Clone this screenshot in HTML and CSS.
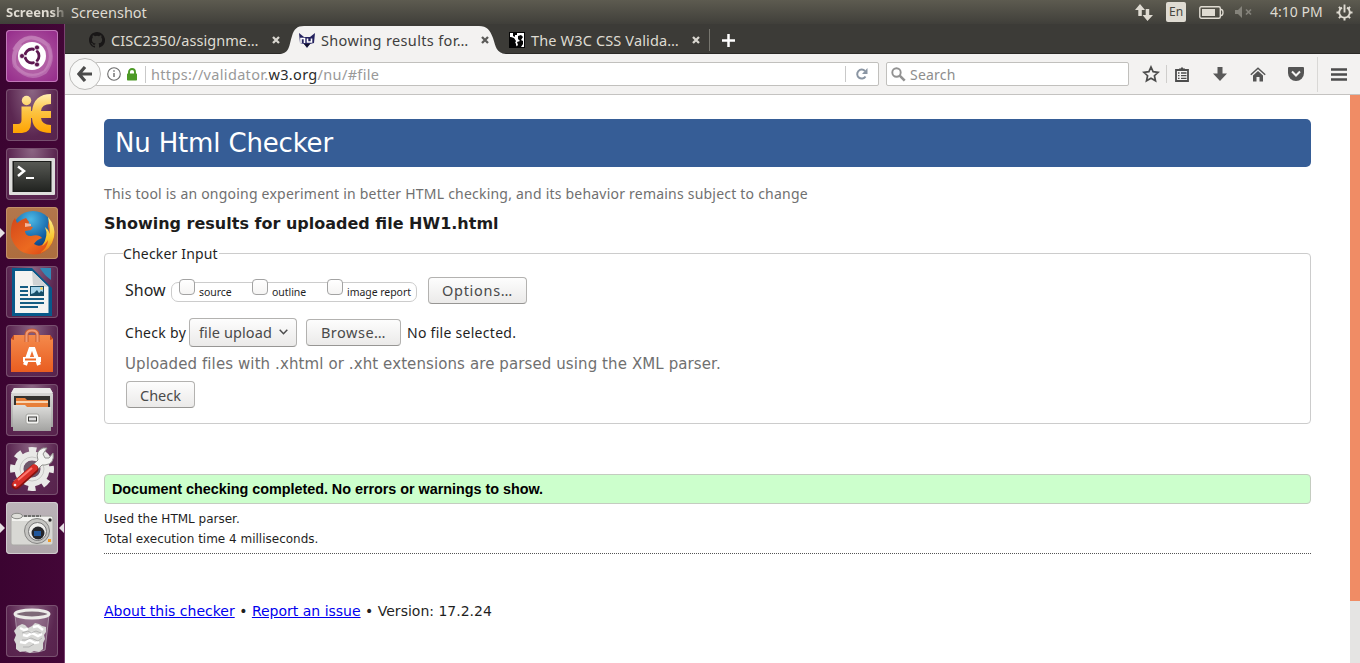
FILE: index.html
```html
<!DOCTYPE html>
<html lang="en">
<head>
<meta charset="utf-8">
<title>Nu Html Checker</title>
<link rel="stylesheet" href="styles.css">
</head>
<body>
<svg class="defs" width="0" height="0">
  <defs>
    <linearGradient id="gold" gradientUnits="userSpaceOnUse" x1="0" y1="4" x2="0" y2="44"><stop offset="0" stop-color="#fff0b8"/><stop offset=".45" stop-color="#fcc544"/><stop offset="1" stop-color="#ffa200"/></linearGradient>
    <linearGradient id="term" x1="0" y1="0" x2="0" y2="1"><stop offset="0" stop-color="#575954"/><stop offset="1" stop-color="#232522"/></linearGradient>
    <radialGradient id="globe" cx=".45" cy=".2" r=".8"><stop offset="0" stop-color="#4bb8e5"/><stop offset=".6" stop-color="#1462a6"/><stop offset="1" stop-color="#082d6b"/></radialGradient>
    <linearGradient id="fox" x1="0" y1="0" x2="1" y2="1"><stop offset="0" stop-color="#d4481a"/><stop offset=".6" stop-color="#ec6a20"/><stop offset="1" stop-color="#d83b12"/></linearGradient>
    <linearGradient id="tail" x1="0" y1="0" x2="0" y2="1"><stop offset="0" stop-color="#fff08b"/><stop offset=".6" stop-color="#f8c42c"/><stop offset="1" stop-color="#ec741b"/></linearGradient>
    <linearGradient id="bag" x1="0" y1="0" x2="0" y2="1"><stop offset="0" stop-color="#f48a4c"/><stop offset="1" stop-color="#e95d20"/></linearGradient>
    <linearGradient id="metal" x1="0" y1="0" x2="0" y2="1"><stop offset="0" stop-color="#dededc"/><stop offset="1" stop-color="#a3a3a1"/></linearGradient>
  </defs>
</svg>

<header class="panel">
  <div class="panel-app">Screensh</div>
  <div class="panel-title">Screenshot</div>
  <div class="indicators">
    <svg class="ind-net" width="18" height="17" viewBox="0 0 18 17"><path d="M5 0l5 6H6.800v6H3.300V6H0zM12.500 17l-5-6h3.200V5h3.500v6H18z" fill="#dfdbd2"/></svg>
    <span class="ind-lang">En</span>
    <svg class="ind-bat" width="25" height="13" viewBox="0 0 25 13"><rect x=".8" y=".8" width="20.500" height="11.400" rx="1.500" fill="none" stroke="#dfdbd2" stroke-width="1.400"/><path d="M3 3h13v7H3z" fill="#dfdbd2"/><path d="M22 3.500q2 0 2 3t-2 3" fill="none" stroke="#dfdbd2" stroke-width="1.300"/></svg>
    <svg class="ind-vol" width="18" height="12" viewBox="0 0 18 12"><path d="M0 4h3l4-4v12L3 8H0z" fill="#85837b"/><path d="M11 3.500l5 5m0-5l-5 5" stroke="#85837b" stroke-width="1.700"/></svg>
    <span class="clock">4:10 PM</span>
    <svg class="ind-gear" width="17" height="17" viewBox="0 0 17 17"><g fill="none" stroke="#dfdbd2"><path d="M6 3.700a5.300 5.300 0 1 0 5 0" stroke-width="1.900"/><path d="M8.500 .5v8" stroke-width="1.900"/><path d="M3.500 8.500H.5m13 0h3M8.500 13.500v3M4.900 12.100l-2 2m9.200-2l2 2M4.700 4.700l-1.800-1.800m9.400 1.800l1.800-1.800" stroke-width="2"/></g></svg>
  </div>
</header>

<div class="workspace">
  <nav class="launcher">
    <div class="tile tile-dash"><svg width="52" height="52" viewBox="0 0 52 52"><circle cx="26" cy="26" r="20" fill="#c078b4" opacity=".45"/><path d="M8 20Q21-2 42 15Q49 29 39 42Q23 52 9 36Q5 24 15 14" fill="none" stroke="#e0b5d9" stroke-width="4" opacity=".35"/><circle cx="26" cy="26" r="14" fill="#fff"/><circle cx="26" cy="26" r="7" fill="none" stroke="#5d1750" stroke-width="2.800"/><path d="M26 26L33 14M26 26L33 38M26 26H12" stroke="#fff" stroke-width="1.600"/><circle cx="26" cy="26" r="4" fill="#fff"/><g fill="#5d1750" stroke="#fff" stroke-width=".7"><circle cx="16" cy="26" r="2.500"/><circle cx="31" cy="17.500" r="2.500"/><circle cx="31" cy="34.500" r="2.500"/></g></svg></div>
    <div class="tile"><svg width="52" height="52" viewBox="0 0 52 52"><g fill="url(#gold)"><circle cx="20.500" cy="11.500" r="4.700"/><path d="M15.500 17.500h9.500v16q0 10-9 10.500H7v-9h5q3.500 0 3.500-4z"/><path d="M45 5v10q-9.500 0-10 7h10v7H35q.5 6.500 10 7v8Q27 44 26 29h-3v-7h3Q28 5 45 5z"/></g></svg></div>
    <div class="tile"><svg width="52" height="52" viewBox="0 0 52 52"><rect x="3" y="10" width="46" height="37" rx="1" fill="#dededc"/><rect x="6.500" y="13" width="39" height="31" fill="#1c1d1b"/><rect x="8" y="14" width="36" height="28.500" fill="url(#term)"/><path d="M12 18.500l6 4.500-6 5" fill="none" stroke="#fff" stroke-width="2.500"/><path d="M20 30h8" stroke="#fff" stroke-width="2"/></svg></div>
    <div class="tile tile-firefox"><svg width="52" height="52" viewBox="0 0 52 52"><circle cx="27" cy="25" r="21" fill="url(#globe)"/><path d="M43 11Q50 23 48 31Q42 50 23 47Q10 45 5 30Q4 17 9 11L11 16Q16 12 20 11L23 15L22 19L27 20L25 23L19 24Q19 29 25 29Q33 27 36 31Q30 33 28 37Q36 42 41 32Q44 27 42 19z" fill="url(#fox)"/><path d="M42 10Q50 19 48 30Q45 43 34 46Q42 40 42 33Q39 38 36 39Q43 29 39 20Q43 23 44 27Q44 18 42 10z" fill="url(#tail)"/><path d="M19 16l6 1v2l-6 1z" fill="#f5b59b"/></svg><i class="run-left"></i></div>
    <div class="tile"><svg width="52" height="52" viewBox="0 0 52 52"><path d="M6 2h20l20 20v28H6z" fill="#07598a"/><path d="M9 5h17l16.500 16v26H9z" fill="#f4f4f2"/><path d="M26 5l1 14 15.500 2z" fill="#cfd3d4"/><path d="M34 2h11v12q-7-5-11-12z" fill="#3288b6"/><path d="M14 21h8m-8 4h8m-8 4h8m-8 4h24m-24 4h24m-24 4h18" stroke="#155d83" stroke-width="2"/><path d="M24 20h14v10H24z" fill="#164e68"/><path d="M25 21h12v5l-2-1-2 2-2-3-3 3-3 1z" fill="#a8d5ea"/><circle cx="35.500" cy="22.500" r="1.200" fill="#ffcf42"/></svg></div>
    <div class="tile"><svg width="52" height="52" viewBox="0 0 52 52"><path d="M5 14l3-4h36l3 4v33H5z" fill="url(#bag)"/><path d="M5 14l3-4v5zM47 14l-3-4v5z" fill="#c84a19"/><path d="M20.500 17v-7q0-4.500 5.500-4.500t5.500 4.500v7" fill="none" stroke="#c65a31" stroke-width="4"/><path d="M20.500 17v-7q0-4.500 5.500-4.500t5.500 4.500v7" fill="none" stroke="#f19a72" stroke-width="2.200"/><path d="M19 40l5.500-16h3L33 40" fill="none" stroke="#fff" stroke-width="4"/><path d="M17 34.500h18" stroke="#fff" stroke-width="5"/><path d="M19 34.500h11" stroke="#ec6827" stroke-width="2"/></svg></div>
    <div class="tile"><svg width="52" height="52" viewBox="0 0 52 52"><path d="M8 4h36l3 6v33H5V10z" fill="url(#metal)"/><path d="M8 4h36l3 5H5z" fill="#ebebe9"/><path d="M8 12h36v20H8z" fill="#343330"/><path d="M10 14h9l2 2h21v8H10z" fill="#e77f39"/><path d="M10 18h32" stroke="#fff1d8" stroke-width="1.500"/><path d="M7 21h12l2 2h24v24H7z" fill="url(#metal)"/><rect x="20" y="30" width="13" height="10" rx="2" fill="#f3f3f1" stroke="#a4a4a0"/><rect x="22.500" y="33" width="8" height="4" fill="#ddd" stroke="#393936"/></svg></div>
    <div class="tile"><svg width="52" height="52" viewBox="0 0 52 52"><g fill="none" stroke="#e9e9e7"><circle cx="26" cy="26" r="13" stroke-width="9"/><circle cx="26" cy="26" r="19" stroke-width="6" stroke-dasharray="7.460 7.460" stroke-dashoffset="3.700"/></g><circle cx="26" cy="26" r="12" fill="none" stroke="#c8c8c6"/><circle cx="26" cy="26" r="8" fill="#6c5869"/><path d="M27 22l5-5q-3-9 5-12l4 0-4 6 2 4 4 0 4-5q2 11-8 12h-3l-5 5z" fill="#f3f3f1" stroke="#92928f"/><path d="M10 42l18-16" stroke="#87120f" stroke-width="9" stroke-linecap="round"/><path d="M10 41l18-16" stroke="#d72f29" stroke-width="7" stroke-linecap="round"/><path d="M12 37l14-12" stroke="#ff7770" stroke-width="2"/><circle cx="9" cy="42" r="1.300" fill="#eee"/></svg></div>
    <div class="tile tile-camera"><svg width="52" height="52" viewBox="0 0 52 52"><rect x="5" y="14" width="42" height="29" rx="2" fill="#d8d8d4" stroke="#aaa9a6"/><path d="M6 15h40v4H6z" fill="#f2f2ef"/><ellipse cx="11" cy="14" rx="5.500" ry="2.700" fill="#deded9" stroke="#8b8b88"/><path d="M18 14h17" stroke="#6f6f6d" stroke-width="2" stroke-dasharray="3 1"/><circle cx="31" cy="29" r="12.500" fill="#c4c4c1" stroke="#858583"/><circle cx="31.500" cy="29.500" r="9" fill="#efefed" stroke="#777"/><circle cx="32" cy="31" r="6.500" fill="#25262a"/><path d="M28 29h7v5h-7z" fill="#20569b"/><circle cx="44" cy="18" r="1.700" fill="#222"/><path d="M42 37h3v3h-3z" fill="#f49b24"/></svg><i class="run-left"></i><i class="run-right"></i></div>
    <div class="tile tile-trash"><svg width="52" height="52" viewBox="0 0 52 52"><path d="M9 10l4 35q13 5 26 0l4-35" fill="#eee" fill-opacity=".2" stroke="#a48da0"/><path d="M12 21l4-2 3 1 3 3 4-2 3-3 4 1 3 2 4 1 0 5-2 3 1 4-2 4v6l-4 3-5-1-4 2-5-2-5 1-4-3v-5l-2-4 2-5-2-4z" fill="#d8d8d6"/><path d="M14 23l4 2 4-1m5-2l5-1 5 4m-20 5l4 1 5-3 6 3 4-2m-22 8l5 1 4-3 6 3 4-1" fill="none" stroke="#fff" stroke-width="2.500"/><path d="M16 28l6-2 3 2 5-2 5 2m-19 7l4 0 5-2 7 3 4-3m-19 9l6 0 5-3" fill="none" stroke="#aaa" stroke-width=".8"/><ellipse cx="26" cy="9" rx="17" ry="4" fill="#7e6a78" stroke="#ecebe8" stroke-width="3"/></svg></div>
  </nav>

  <main class="browser">
    <div class="tabs">
      <div class="tab tab-github">
        <svg class="fav" width="16" height="16" viewBox="0 0 16 16"><path fill="#191717" d="M8 0C3.580 0 0 3.580 0 8c0 3.540 2.290 6.530 5.470 7.590.4.070.550-.17.550-.38v-1.490c-2.010.37-2.530-.49-2.690-.94-.09-.23-.48-.94-.82-1.130-.28-.15-.68-.52-.01-.53.630-.01 1.080.58 1.230.82.720 1.210 1.870.87 2.330.66.070-.52.280-.87.510-1.070-1.780-.2-3.640-.89-3.640-3.950 0-.87.310-1.590.82-2.150-.08-.2-.36-1.020.08-2.120 0 0 .67-.21 2.200.82a7.500 7.500 0 0 1 4 0c1.530-1.040 2.200-.82 2.200-.82.440 1.100.16 1.920.08 2.120.51.560.82 1.270.82 2.150 0 3.070-1.870 3.750-3.650 3.950.29.250.54.730.54 1.480v2.200c0 .21.150.46.550.38A8 8 0 0 0 8 0z"/></svg>
        <span class="tab-name t1">CISC2350/assignme…</span>
        <svg class="close" width="8" height="8" viewBox="0 0 8 8"><path d="M1 1l6 6m0-6l-6 6" stroke="#d9d6cf" stroke-width="2.300"/></svg>
      </div>
      <div class="tab tab-active">
        <svg class="tab-shape" width="232" height="30" viewBox="0 0 232 30"><path d="M0 30C10 29 9 21 12 12C14 5 17 2 24 2H199C207 2 210 6 213 14C216 23 216 29 226 30z" fill="#f3f2f1"/></svg>
        <svg class="fav" width="16" height="16" viewBox="0 0 16 16"><path d="M0 1l5 4h6l5-4-1 10-4 1-3 4-3-4-4-1z" fill="#25235f"/><path d="M2 11V6.500h3.500V11m3-4.500V10h4V6.500" fill="none" stroke="#fff" stroke-width="1.600"/><path d="M5 12h6l-3 3z" fill="#111127"/></svg>
        <span class="tab-name t2">Showing results for…</span>
        <svg class="close" width="8" height="8" viewBox="0 0 8 8"><path d="M1 1l6 6m0-6l-6 6" stroke="#5b5b59" stroke-width="2.300"/></svg>
      </div>
      <div class="tab tab-css">
        <svg class="fav" width="16" height="16" viewBox="0 0 16 16"><path d="M0 0h16v16H0z" fill="#050505"/><path d="M1 1h3v3l2 1V3h2V1h7v14h-3l2-3V9l-2-1 2-3-2-2-3 1v3l2 2-3 1 1 3-2 2H7v-3L5 9 4 6 1 5z" fill="#fff"/><path d="M1 5l4 1 2 3-1 2 2 4H1z" fill="#050505"/></svg>
        <span class="tab-name t3">The W3C CSS Valida…</span>
        <svg class="close" width="8" height="8" viewBox="0 0 8 8"><path d="M1 1l6 6m0-6l-6 6" stroke="#d9d6cf" stroke-width="2.300"/></svg>
      </div>
      <svg class="newtab" width="13" height="13" viewBox="0 0 13 13"><path d="M6.500 0v13M0 6.500h13" stroke="#fff" stroke-width="2.500"/></svg>
    </div>

    <div class="toolbar">
      <div class="back"><svg width="16" height="16" viewBox="0 0 16 16"><path d="M8 1L2 8l6 7M2.500 8H15" fill="none" stroke="#4b4b4b" stroke-width="3.200"/></svg></div>
      <div class="urlbar">
        <svg class="info" width="14" height="14" viewBox="0 0 14 14"><circle cx="7" cy="7" r="6.300" fill="none" stroke="#6b6b6b" stroke-width="1.100"/><path d="M7 6v4M7 3.300v1.400" stroke="#6b6b6b" stroke-width="1.400"/></svg>
        <svg class="lock" width="10" height="13" viewBox="0 0 10 13"><path d="M2 6V4a3 3 0 0 1 6 0v2" fill="none" stroke="#4d9a26" stroke-width="1.900"/><rect y="5.500" width="10" height="7" rx=".7" fill="#4d9a26"/></svg>
        <span class="url">https://validator.<b>w3.org</b>/nu/#file</span>
        <span class="reload"><svg width="12" height="12" viewBox="0 0 12 12"><path d="M9.500 8.500A4.500 4.500 0 1 1 9 3" fill="none" stroke="#8a95a3" stroke-width="2"/><path d="M11.500 0v6H6z" fill="#8a95a3"/></svg></span>
      </div>
      <div class="search"><svg width="15" height="15" viewBox="0 0 15 15"><circle cx="5.500" cy="5.500" r="4.200" fill="none" stroke="#929292" stroke-width="1.900"/><path d="M8.700 8.700l5 5" stroke="#929292" stroke-width="2.600"/></svg><span>Search</span></div>
      <div class="actions">
        <svg class="a-star" width="18" height="18" viewBox="0 0 18 18"><path d="M9 2l2.100 4.700 5.100.6-3.800 3.400 1.100 5.100L9 13.200l-4.500 2.600 1.100-5.100-3.800-3.400 5.100-.6z" fill="none" stroke="#4c4c4c" stroke-width="1.700"/></svg>
        <i class="a-sep"></i>
        <svg class="a-list" width="14" height="15" viewBox="0 0 14 15"><path d="M1 3h12v11H1z" fill="none" stroke="#4c4c4c" stroke-width="1.800"/><path d="M4 3V1.500h1.500L7 0l1.500 1.500H10V3z" fill="#4c4c4c"/><path d="M3 6h1.500M6 6h5.500M3 8.700h1.500M6 8.700h5.500M3 11.400h1.500M6 11.400h5.500" stroke="#4c4c4c" stroke-width="1.300"/></svg>
        <svg class="a-down" width="14" height="14" viewBox="0 0 14 14"><path d="M4.500 0h5v6.500H14L7 14 0 6.500h4.500z" fill="#595959"/></svg>
        <svg class="a-home" width="16" height="15" viewBox="0 0 16 15"><path d="M.8 7.700L8 1.300l7.200 6.400" fill="none" stroke="#555" stroke-width="1.500"/><path d="M3 8.500l5-4.500 5 4.500V14.500H9.500v-4.500h-3v4.500H3z" fill="#555"/></svg>
        <svg class="a-pocket" width="16" height="14" viewBox="0 0 16 14"><path d="M1 0h14q1 0 1 1v5a8 8 0 0 1-16 0V1q0-1 1-1z" fill="#555"/><path d="M4 4.500l4 4 4-4" fill="none" stroke="#f5f4f3" stroke-width="2"/></svg>
        <i class="a-sep2"></i>
        <svg class="a-menu" width="16" height="13" viewBox="0 0 16 13"><path d="M0 1.500h16M0 6.500h16M0 11.500h16" stroke="#4c4c4c" stroke-width="2.600"/></svg>
      </div>
    </div>

    <div class="viewport">
      <div class="page">
        <h1><span>Nu Html Checker</span></h1>
        <p class="notice">This tool is an ongoing experiment in better HTML checking, and its behavior remains subject to change</p>
        <h2>Showing results for uploaded file HW1.html</h2>
        <section class="checker">
          <div class="legend">Checker Input</div>
          <div class="show-row">
            <span class="show">Show</span>
            <div class="checks">
              <label class="c1"><i></i><span>source</span></label>
              <label class="c2"><i></i><span>outline</span></label>
              <label class="c3"><i></i><span>image report</span></label>
            </div>
            <button class="btn options">Options…</button>
          </div>
          <div class="by-row">
            <span class="by">Check by</span>
            <button class="btn select"><span>file upload</span><svg width="9" height="6" viewBox="0 0 9 6"><path d="M.7.7l3.800 4 3.800-4" fill="none" stroke="#4c4c4c" stroke-width="1.500"/></svg></button>
            <button class="btn browse">Browse…</button>
            <span class="nofile">No file selected.</span>
          </div>
          <p class="hint">Uploaded files with .xhtml or .xht extensions are parsed using the XML parser.</p>
          <button class="btn check">Check</button>
        </section>
        <div class="success">Document checking completed. No errors or warnings to show.</div>
        <div class="details"><p>Used the HTML parser.</p><p>Total execution time 4 milliseconds.</p></div>
        <footer><a>About this checker</a> • <a>Report an issue</a> • Version: 17.2.24</footer>
      </div>
      <div class="scroll"><div class="thumb"></div></div>
    </div>
  </main>
</div>
</body>
</html>
```

FILE: styles.css
```css
* { box-sizing: border-box; }
body { margin: 0; width: 1360px; height: 663px; overflow: hidden; background: #fff; font-family: "Noto Sans", sans-serif; font-size: 14px; color: #1f1f1f; }
h1, h2, p { margin: 0; font-weight: normal; }
svg { display: block; flex: none; }
span { white-space: nowrap; }
.defs { position: absolute; }

/* Top panel */
.panel { height: 24px; display: flex; background: linear-gradient(#5d5b50, #403f3a); color: #dfdbd2; line-height: 24px; }
.panel-app { width: 65px; padding-left: 6px; font-weight: bold; font-size: 13px; -webkit-mask-image: linear-gradient(90deg, #000 52px, transparent 68px); mask-image: linear-gradient(90deg, #000 52px, transparent 68px); }
.panel-title { padding-left: 6px; font-size: 14.500px; }
.indicators { margin-left: auto; width: 225px; display: flex; align-items: center; }
.ind-lang { width: 20px; height: 20px; margin-left: 13px; border-radius: 2px; background: #dfdbd2; color: #474640; font-size: 12px; line-height: 20px; text-align: center; }
.ind-bat { margin-left: 13px; }
.ind-vol { margin-left: 11px; }
.clock { margin-left: 17px; width: 54px; }
.ind-gear { margin-left: 12px; }

/* Launcher */
.workspace { display: flex; height: 639px; }
.launcher { width: 65px; padding: 6px 0 0 6px; display: flex; flex-direction: column; gap: 7px; background: linear-gradient(90deg, #3b0431, #430637); border-right: 1px solid #7a4270; }
.tile { position: relative; width: 52px; height: 52px; flex: none; border-radius: 4px; background: radial-gradient(ellipse at 50% 0, #8c6684, #5b2751 65%, #57224c); box-shadow: inset 0 0 0 1px #78506f; }
.tile-dash { background: radial-gradient(#b464a6, #94298a); box-shadow: inset 0 0 0 1px #c278b9; }
.tile-firefox { background: linear-gradient(#b3774c, #ad6d3e); box-shadow: inset 0 0 0 1px #c29069; }
.tile-camera { background: linear-gradient(#bcb4b9, #ada5a9); box-shadow: inset 0 0 0 1px #d0cace; }
.tile-trash { margin-top: 44px; }
.run-left, .run-right { position: absolute; top: 21px; border: 5px solid transparent; }
.run-left { left: -6px; border-left-color: #e5dfe3; border-right: 0; }
.run-right { right: -6px; border-right-color: #e5dfe3; border-left: 0; }

/* Browser chrome */
.browser { flex: 1; display: flex; flex-direction: column; }
.tabs { height: 30px; display: flex; align-items: center; background: #3c3b37; border-bottom: 1px solid #2a2927; color: #dfdbd2; }
.tab { position: relative; display: flex; align-items: center; height: 30px; padding-top: 2px; font-size: 14.500px; }
.tab > * { position: relative; }
.tab-name { margin-left: 6px; }
.t1 { letter-spacing: .05px; }
.t2 { letter-spacing: .35px; }
.t3 { letter-spacing: .15px; }
.close { margin-left: auto; }
.tab-github { width: 191px; margin-left: 24px; }
.tab-active { width: 209px; padding-left: 19px; color: #3f3f3e; }
.tab-active .tab-shape { position: absolute; left: 0; top: 0; }
.tab-css { width: 201px; padding: 2px 10px 0 0; margin-left: 20px; }
.tab-css::after { content: ""; position: absolute; right: 0; top: 5px; width: 1px; height: 22px; background: #77766f; }
.newtab { margin: 3px 0 0 12px; }
.toolbar { height: 41px; display: flex; align-items: center; background: #f3f2f1; border-bottom: 1px solid #c4c3c1; }
.back { position: relative; z-index: 1; width: 32px; height: 32px; margin-left: 4px; border: 1px solid #bcbbb9; border-radius: 50%; background: #f8f8f7; display: flex; align-items: center; justify-content: center; }
.urlbar { width: 784px; height: 24px; margin-left: -6px; border: 1px solid #c1c0bd; border-radius: 2px; background: #fff; display: flex; align-items: center; }
.info { margin-left: 11px; }
.lock { margin-left: 6px; }
.url { margin-left: 8px; padding-left: 5px; border-left: 1px solid #c9c9c9; line-height: 17px; font-size: 14.500px; letter-spacing: .33px; color: #999; }
.url b { font-weight: normal; color: #2c2c2c; }
.reload { margin-left: auto; width: 33px; height: 16px; border-left: 1px solid #c9c9c9; padding: 2px 0 0 10px; }
.search { width: 243px; height: 24px; margin-left: 7px; border: 1px solid #c1c0bd; border-radius: 2px; background: #fff; display: flex; align-items: center; padding-left: 4px; color: #8d8d8d; }
.search span { margin-left: 4px; letter-spacing: .2px; }
.actions { display: flex; align-items: center; height: 40px; }
.a-star { margin-left: 13px; }
.a-sep { width: 1px; height: 18px; margin-left: 6px; background: #cfcecc; }
.a-list { margin-left: 8px; }
.a-down { margin-left: 24px; }
.a-home { margin-left: 23px; }
.a-pocket { margin-left: 22px; }
.a-sep2 { width: 1px; height: 35px; margin-left: 13px; background: #d9d8d6; }
.a-menu { margin-left: 13px; }

/* Checker page */
.viewport { flex: 1; display: flex; background: #fff; }
.page { flex: 1; padding: 24px 39px 0; }
.scroll { width: 10px; background: #e5e4e3; }
.thumb { height: 506px; background: #f08c65; }
h1 { height: 48px; padding-left: 11px; border-radius: 5px; background: #365d96; color: #fff; font: 26px/48px "DejaVu Sans", sans-serif; letter-spacing: -.17px; }
.notice { margin-top: 17px; line-height: 20px; letter-spacing: .215px; color: #707070; white-space: nowrap; }
h2 { margin-top: 10px; font: bold 16px/20px "DejaVu Sans", sans-serif; color: #1c1c1c; }
.checker { height: 171px; margin-top: 19px; padding: 0 20px; border: 1px solid #ccc; border-radius: 4px; }
.legend { width: 96px; height: 20px; margin: -10px 0 0 -2px; background: #fff; line-height: 20px; letter-spacing: .17px; white-space: nowrap; color: #1f1f1f; }
.show-row { display: flex; align-items: center; height: 28px; margin-top: 12px; }
.show { width: 46px; font-size: 16px; }
.checks { width: 246px; height: 20px; margin-top: 4px; border: 1px solid #ccc; border-radius: 7px; display: flex; font-size: 10.500px; }
.checks label { display: flex; }
.checks i { width: 16px; height: 16px; margin-top: -4px; border: 1px solid #a3a3a3; border-radius: 4px; background: linear-gradient(#fff, #f5f4f3); }
.checks label span { margin-left: 4px; line-height: 18px; letter-spacing: -.05px; }
.c1 { width: 73px; margin-left: 7px; }
.c2 { width: 75px; }
.btn { height: 27px; margin: 0; padding: 0; border: 1px solid #b3b2b0; border-bottom-color: #979694; border-radius: 4px; background: linear-gradient(#fdfdfd, #ebeae9); color: #4a4a4a; font: 14.500px/24px "Noto Sans", sans-serif; text-align: center; }
.options { width: 99px; margin-left: 11px; letter-spacing: .7px; }
.by-row { display: flex; align-items: center; height: 30px; margin-top: 13px; }
.by { width: 64px; letter-spacing: .3px; }
.select { width: 108px; height: 29px; display: flex; align-items: center; padding: 0 8px 0 9px; justify-content: space-between; letter-spacing: .1px; }
.browse { width: 95px; margin-left: 9px; letter-spacing: .5px; }
.nofile { margin-left: 6px; letter-spacing: .28px; }
.hint { margin-top: 7px; font: 15px/20px "DejaVu Sans", sans-serif; letter-spacing: .1px; color: #707070; white-space: nowrap; }
.check { display: block; width: 69px; margin: 7px 0 0 1px; }
.success { height: 30px; margin-top: 50px; padding-left: 7px; border: 1px solid #c4ccc0; border-radius: 4px; background: #cfc; color: #000; font: bold 14.400px/28px "Liberation Sans", sans-serif; letter-spacing: -.03px; }
.details { height: 50px; padding-top: 5px; border-bottom: 1px dotted #555; font: 12px/20px "DejaVu Sans", sans-serif; }
footer { margin-top: 47px; font: 14px/20px "DejaVu Sans", sans-serif; white-space: nowrap; }
footer a { color: #00e; text-decoration: underline; }
```
